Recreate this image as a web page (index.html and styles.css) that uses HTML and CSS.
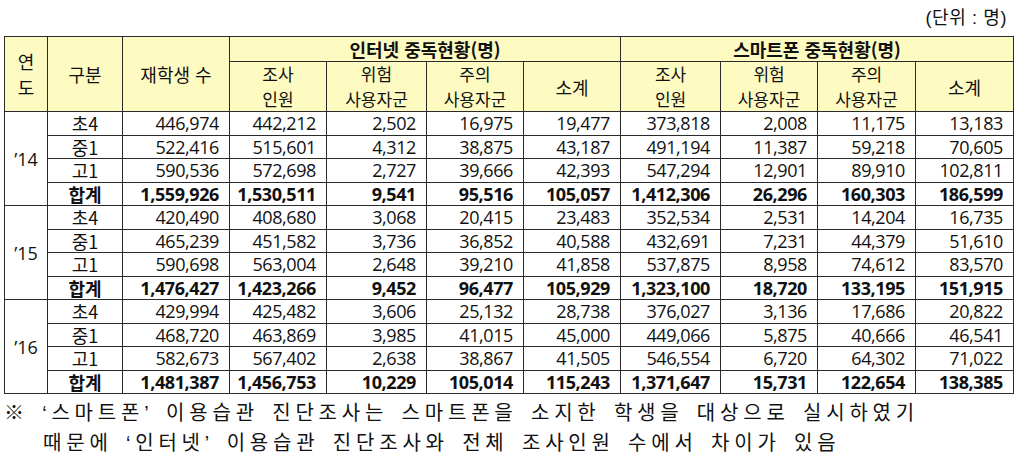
FILE: index.html
```html
<!DOCTYPE html>
<html lang="ko">
<head>
<meta charset="utf-8">
<link rel="stylesheet" href="styles.css">
</head>
<body>
<div class="page">
  <div class="unit">(단위 : 명)</div>
  <table class="stats">
    <colgroup>
      <col class="c-year"><col class="c-kind"><col class="c-stu">
      <col class="c-a"><col class="c-b"><col class="c-a"><col class="c-a">
      <col class="c-b"><col class="c-a"><col class="c-c"><col class="c-c">
    </colgroup>
    <thead>
      <tr class="h1">
        <th rowspan="2" class="year-h">연<br>도</th>
        <th rowspan="2">구분</th>
        <th rowspan="2">재학생 수</th>
        <th colspan="4" class="group">인터넷 중독현황(명)</th>
        <th colspan="4" class="group">스마트폰 중독현황(명)</th>
      </tr>
      <tr class="h2">
        <th class="two">조사<br>인원</th>
        <th class="two">위험<br>사용자군</th>
        <th class="two">주의<br>사용자군</th>
        <th>소계</th>
        <th class="two">조사<br>인원</th>
        <th class="two">위험<br>사용자군</th>
        <th class="two">주의<br>사용자군</th>
        <th>소계</th>
      </tr>
    </thead>
    <tbody>
      <tr><td rowspan="4" class="year">’14</td><td class="kind">초4</td><td>446,974</td><td>442,212</td><td>2,502</td><td>16,975</td><td>19,477</td><td>373,818</td><td>2,008</td><td>11,175</td><td>13,183</td></tr>
      <tr><td class="kind">중1</td><td>522,416</td><td>515,601</td><td>4,312</td><td>38,875</td><td>43,187</td><td>491,194</td><td>11,387</td><td>59,218</td><td>70,605</td></tr>
      <tr><td class="kind">고1</td><td>590,536</td><td>572,698</td><td>2,727</td><td>39,666</td><td>42,393</td><td>547,294</td><td>12,901</td><td>89,910</td><td>102,811</td></tr>
      <tr class="total"><td class="kind">합계</td><td>1,559,926</td><td>1,530,511</td><td>9,541</td><td>95,516</td><td>105,057</td><td>1,412,306</td><td>26,296</td><td>160,303</td><td>186,599</td></tr>

      <tr><td rowspan="4" class="year">’15</td><td class="kind">초4</td><td>420,490</td><td>408,680</td><td>3,068</td><td>20,415</td><td>23,483</td><td>352,534</td><td>2,531</td><td>14,204</td><td>16,735</td></tr>
      <tr><td class="kind">중1</td><td>465,239</td><td>451,582</td><td>3,736</td><td>36,852</td><td>40,588</td><td>432,691</td><td>7,231</td><td>44,379</td><td>51,610</td></tr>
      <tr><td class="kind">고1</td><td>590,698</td><td>563,004</td><td>2,648</td><td>39,210</td><td>41,858</td><td>537,875</td><td>8,958</td><td>74,612</td><td>83,570</td></tr>
      <tr class="total"><td class="kind">합계</td><td>1,476,427</td><td>1,423,266</td><td>9,452</td><td>96,477</td><td>105,929</td><td>1,323,100</td><td>18,720</td><td>133,195</td><td>151,915</td></tr>

      <tr><td rowspan="4" class="year">’16</td><td class="kind">초4</td><td>429,994</td><td>425,482</td><td>3,606</td><td>25,132</td><td>28,738</td><td>376,027</td><td>3,136</td><td>17,686</td><td>20,822</td></tr>
      <tr><td class="kind">중1</td><td>468,720</td><td>463,869</td><td>3,985</td><td>41,015</td><td>45,000</td><td>449,066</td><td>5,875</td><td>40,666</td><td>46,541</td></tr>
      <tr><td class="kind">고1</td><td>582,673</td><td>567,402</td><td>2,638</td><td>38,867</td><td>41,505</td><td>546,554</td><td>6,720</td><td>64,302</td><td>71,022</td></tr>
      <tr class="total"><td class="kind">합계</td><td>1,481,387</td><td>1,456,753</td><td>10,229</td><td>105,014</td><td>115,243</td><td>1,371,647</td><td>15,731</td><td>122,654</td><td>138,385</td></tr>
    </tbody>
  </table>
  <div class="note">
    <p class="note-line">※ ‘스마트폰’ 이용습관 진단조사는 스마트폰을 소지한 학생을 대상으로 실시하였기</p>
    <p class="note-line indent">때문에 ‘인터넷’ 이용습관 진단조사와 전체 조사인원 수에서 차이가 있음</p>
  </div>
</div>
</body>
</html>
```

FILE: styles.css
```css
html, body {
  margin: 0;
  padding: 0;
  background: #ffffff;
}

.page {
  width: 1009px;
  padding-left: 4px;
  font-family: "Open Sans", "Noto Sans CJK KR", sans-serif;
  color: #111;
}

.unit {
  height: 36px;
  line-height: 36px;
  text-align: right;
  font-size: 18px;
  letter-spacing: 0.6px;
  padding-right: 6px;
  font-family: "Liberation Sans", "Noto Sans CJK KR", sans-serif;
}

.stats {
  border-collapse: collapse;
  table-layout: fixed;
  width: 1009px;
  font-size: 18px;
}

.c-year { width: 43px; }
.c-kind { width: 75px; }
.c-stu  { width: 107px; }
.c-a    { width: 97px; }
.c-b    { width: 100px; }
.c-c    { width: 98px; }

.stats th,
.stats td {
  border: 1px solid #2a2a2a;
  padding: 0;
}

.stats th {
  background: #fefbc2;
  font-weight: 400;
  font-family: "Noto Sans CJK KR", sans-serif;
  text-align: center;
  line-height: 24px;
  vertical-align: middle;
}

.stats th.two {
  font-size: 17px;
  line-height: 24.6px;
}

.stats th.year-h {
  line-height: 26px;
}

.stats th.group {
  font-weight: 700;
}

.h1 { height: 24px; }
.h2 { height: 48px; }

.stats tbody tr { height: 23.5px; }

.stats td {
  text-align: right;
  padding-right: 10px;
  line-height: 20px;
  letter-spacing: -0.4px;
  white-space: nowrap;
}

.stats td.kind {
  text-align: center;
  padding-right: 0;
  letter-spacing: 0;
  font-family: "Noto Sans CJK KR", sans-serif;
}

.stats td.year {
  text-align: center;
  padding-right: 0;
  letter-spacing: 0;
}

.total td {
  font-weight: 700;
}

.note {
  margin-top: 4px;
  font-family: "Liberation Sans", "Noto Sans CJK KR", sans-serif;
  font-size: 20px;
  letter-spacing: 4.8px;
  word-spacing: 3px;
  color: #111;
}

.note-line {
  margin: 0;
  line-height: 30px;
  white-space: nowrap;
}

.note-line.indent {
  padding-left: 39px;
}
```
